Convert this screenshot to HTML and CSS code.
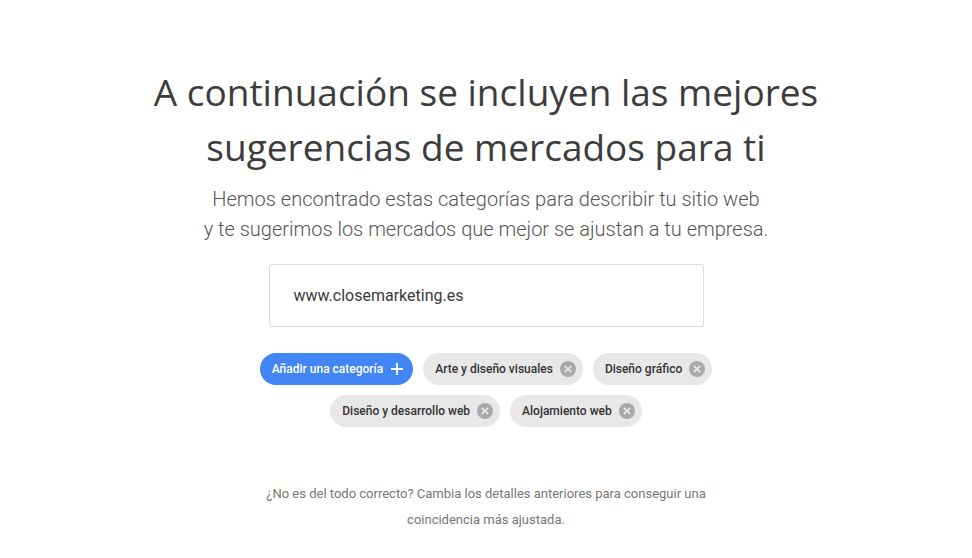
FILE: index.html
```html
<!DOCTYPE html>
<html lang="es">
<head>
<meta charset="utf-8">
<link rel="stylesheet" href="styles.css">
</head>
<body>
<main class="page">
  <h1 class="title">A continuación se incluyen las mejores<br>sugerencias de mercados para ti</h1>
  <p class="subtitle">Hemos encontrado estas categorías para describir tu sitio web<br>y te sugerimos los mercados que mejor se ajustan a tu empresa.</p>
  <div class="field">www.closemarketing.es</div>
  <div class="chips">
    <div class="chip-row">
      <button class="chip chip-add">Añadir una categoría
        <svg class="plus" viewBox="0 0 14 14" width="14" height="14"><path d="M7 1v12M1 7h12" stroke="#fff" stroke-width="1.8" fill="none"/></svg>
      </button>
      <span class="chip">Arte y diseño visuales<svg class="x" viewBox="0 0 18 18" width="18" height="18"><circle cx="9" cy="9" r="8" fill="#a9a9a9"/><path d="M5.8 5.8l6.4 6.4M12.2 5.8l-6.4 6.4" stroke="#e8e8e8" stroke-width="1.7"/></svg></span>
      <span class="chip">Diseño gráfico<svg class="x" viewBox="0 0 18 18" width="18" height="18"><circle cx="9" cy="9" r="8" fill="#a9a9a9"/><path d="M5.8 5.8l6.4 6.4M12.2 5.8l-6.4 6.4" stroke="#e8e8e8" stroke-width="1.7"/></svg></span>
    </div>
    <div class="chip-row">
      <span class="chip">Diseño y desarrollo web<svg class="x" viewBox="0 0 18 18" width="18" height="18"><circle cx="9" cy="9" r="8" fill="#a9a9a9"/><path d="M5.8 5.8l6.4 6.4M12.2 5.8l-6.4 6.4" stroke="#e8e8e8" stroke-width="1.7"/></svg></span>
      <span class="chip">Alojamiento web<svg class="x" viewBox="0 0 18 18" width="18" height="18"><circle cx="9" cy="9" r="8" fill="#a9a9a9"/><path d="M5.8 5.8l6.4 6.4M12.2 5.8l-6.4 6.4" stroke="#e8e8e8" stroke-width="1.7"/></svg></span>
    </div>
  </div>
  <p class="note">¿No es del todo correcto? Cambia los detalles anteriores para conseguir una<br>coincidencia más ajustada.</p>
</main>
</body>
</html>
```
FILE: styles.css
```css
html, body {
  margin: 0;
  padding: 0;
  background: #fff;
}
.page {
  display: flex;
  flex-direction: column;
  align-items: center;
  font-family: Roboto, "Liberation Sans", sans-serif;
  padding-top: 64px;
}
.title {
  margin: 0;
  font-family: "Open Sans", Roboto, sans-serif;
  font-weight: 400;
  font-size: 37px;
  line-height: 55px;
  color: #3c3c3c;
  text-align: center;
  letter-spacing: 0;
}
.subtitle {
  margin: 10px 0 0;
  font-weight: 300;
  font-size: 20px;
  line-height: 30px;
  color: #555;
  text-align: center;
}
.field {
  margin-top: 20px;
  box-sizing: border-box;
  width: 435px;
  height: 63px;
  border: 1px solid #dcdcdc;
  border-radius: 2px;
  padding: 0 24px;
  display: flex;
  align-items: center;
  font-size: 16px;
  color: #3a3a3a;
}
.chips {
  margin-top: 26px;
  display: flex;
  flex-direction: column;
  align-items: center;
  gap: 10px;
}
.chip-row {
  display: flex;
  gap: 10px;
}
.chip {
  box-sizing: border-box;
  height: 32px;
  border-radius: 16px;
  background: #e8e8e8;
  color: #333;
  font-family: Roboto, sans-serif;
  font-weight: 500;
  font-size: 12px;
  display: flex;
  align-items: center;
  gap: 6px;
  padding: 0 6px 0 12px;
  border: none;
}
.chip-add {
  background: #4285f4;
  color: #fff;
  padding: 0 9px 0 12px;
  gap: 7px;
}
.note {
  margin: 54px 0 0;
  font-size: 13px;
  line-height: 26px;
  color: #777;
  text-align: center;
}
```
